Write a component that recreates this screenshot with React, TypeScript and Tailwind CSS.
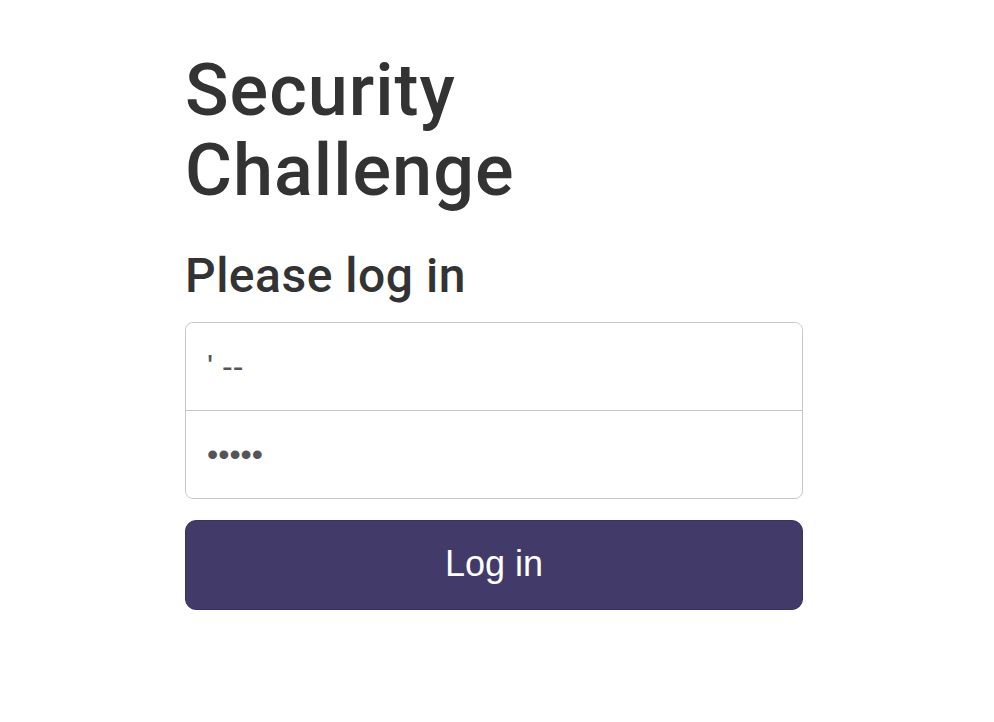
import React from "react";

export default function App() {
  return (
    <div className="min-h-[722px] w-full bg-white">
      <div className="ml-[185px] w-[618px] pt-[51px]">
        <h1 className="font-['Roboto','Liberation_Sans',sans-serif] text-[72px] leading-[80px] font-medium tracking-[1px] text-[#333333]">
          Security
          <br />
          Challenge
        </h1>
        <h3 className="mt-[38px] font-['Roboto','Liberation_Sans',sans-serif] text-[48px] leading-[53px] font-medium tracking-[0.5px] text-[#333333]">
          Please log in
        </h3>
        <form className="mt-[20px]" onSubmit={(e) => e.preventDefault()}>
          <div className="flex flex-col rounded-[8px] border border-[#c8c8c8] bg-white">
            <input
              type="text"
              readOnly
              defaultValue="' --"
              className="h-[87px] w-full rounded-t-[8px] bg-white px-[21px] font-['Liberation_Sans',Arial,sans-serif] text-[32px] text-[#555555] outline-none"
            />
            <div className="h-px w-full bg-[#c8c8c8]" />
            <input
              type="password"
              readOnly
              defaultValue="xxxxx"
              className="h-[87px] w-full rounded-b-[8px] bg-white px-[21px] font-['Liberation_Sans',Arial,sans-serif] text-[32px] text-[#555555] outline-none"
            />
          </div>
          <button
            type="submit"
            className="mt-[21px] flex h-[90px] w-full items-center justify-center rounded-[11px] border border-[#3a3260] bg-[#423a68] pb-[2px] font-['Liberation_Sans',Arial,sans-serif] text-[36px] text-white"
          >
            Log in
          </button>
        </form>
      </div>
    </div>
  );
}
